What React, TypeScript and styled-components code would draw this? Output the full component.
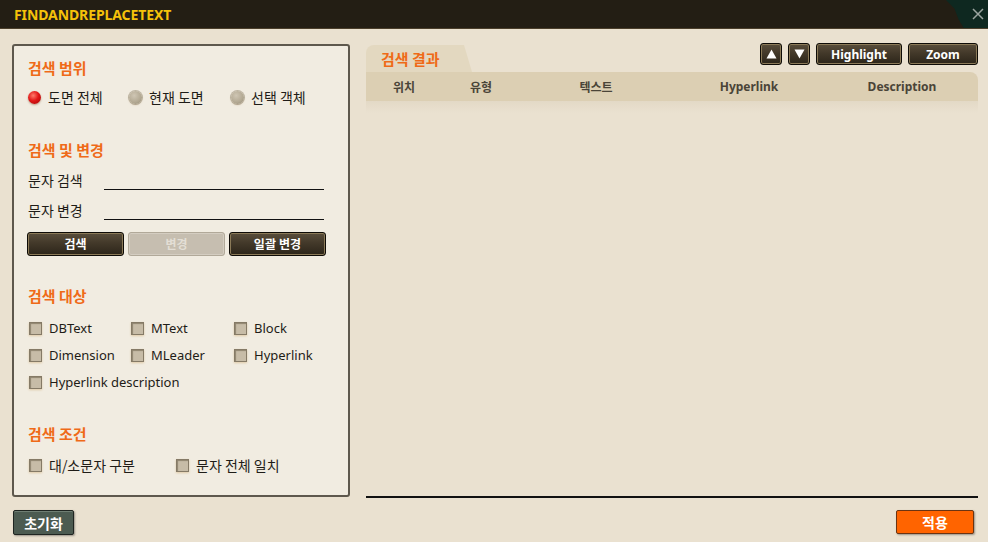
import React from "react";
import styled, { createGlobalStyle, css } from "styled-components";

const Global = createGlobalStyle`
  html, body { margin: 0; padding: 0; background: #eae1d0; }
  body { font-family: "Noto Sans", "Noto Sans CJK KR", sans-serif; }
  * { box-sizing: border-box; }
`;

const Window = styled.div`
  width: 988px;
  height: 542px;
  display: flex;
  flex-direction: column;
  background: #eae1d0;
  overflow: hidden;
`;

const TitleBar = styled.div`
  height: 29px;
  flex: none;
  display: flex;
  align-items: stretch;
  justify-content: space-between;
  background: #231e14;
  border-bottom: 1px solid #4b3f2b;
`;

const Title = styled.div`
  padding-left: 14px;
  display: flex;
  align-items: center;
  color: #f5c20a;
  font-family: "Noto Sans", sans-serif;
  font-weight: 700;
  font-size: 14px;
  letter-spacing: -0.1px;
`;

const CloseArea = styled.div`
  width: 42px;
  display: flex;
  align-items: center;
  justify-content: flex-end;
  padding-right: 4px;
  background: #0e2820;
  clip-path: polygon(0 0, 100% 0, 100% 100%, 42% 100%, 30% 70%, 20% 30%);
`;

const Body = styled.div`
  display: flex;
  padding: 15px 10px 0 12px;
  height: 469px;
  flex: none;
`;

const LeftPanel = styled.div`
  width: 338px;
  height: 453px;
  flex: none;
  background: #f1ece1;
  border: 2px solid #5e584d;
  border-radius: 3px;
  padding: 12px 14px 0 14px;
  display: flex;
  flex-direction: column;
`;

const SectionTitle = styled.div<{ $mt?: number }>`
  height: 20px;
  line-height: 20px;
  color: #ef6a18;
  font-family: "Noto Sans CJK KR", sans-serif;
  font-weight: 700;
  font-size: 15px;
  margin-top: ${(p) => p.$mt ?? 0}px;
`;

const OptionGrid = styled.div<{ $mt: number; $cols?: string }>`
  display: grid;
  grid-template-columns: ${(p) => p.$cols ?? "101px 102px 102px"};
  row-gap: 7px;
  margin-top: ${(p) => p.$mt}px;
`;

const Option = styled.label<{ $span?: number; $indent?: number; $ko?: boolean }>`
  display: flex;
  align-items: center;
  height: 20px;
  gap: 7px;
  font-size: ${(p) => (p.$ko ? 14 : 13)}px;
  color: #1f1c17;
  font-family: ${(p) =>
    p.$ko ? `"Noto Sans CJK KR", sans-serif` : `"Noto Sans", "Noto Sans CJK KR", sans-serif`};
  padding-left: ${(p) => p.$indent ?? 0}px;
  ${(p) => p.$span && css`grid-column: span ${p.$span};`}
  white-space: nowrap;
`;

const RadioDot = styled.span<{ $on?: boolean }>`
  width: 13px;
  height: 13px;
  border-radius: 50%;
  flex: none;
  ${(p) =>
    p.$on
      ? css`
          background: radial-gradient(circle at 40% 35%, #ff7b6b 0%, #e21818 45%, #9c0404 100%);
          box-shadow: 0 1px 2px rgba(120, 60, 20, 0.45);
        `
      : css`
          background: radial-gradient(circle at 40% 35%, #cfc6b4 0%, #b2a892 60%, #8f8670 100%);
          box-shadow: 0 0 0 1px rgba(140, 128, 104, 0.5), 0 1px 2px rgba(150, 110, 60, 0.35);
        `}
`;

const CheckBox = styled.span`
  width: 13px;
  height: 13px;
  flex: none;
  background: #c7bca7;
  border: 1px solid #857a66;
  box-shadow: inset 1px 1px 1px #8f846f, 0 1px 2px rgba(200, 150, 80, 0.4);
`;

const FieldRow = styled.div<{ $mt: number }>`
  display: flex;
  align-items: stretch;
  height: 20px;
  margin-top: ${(p) => p.$mt}px;
`;

const FieldLabel = styled.div`
  width: 76px;
  flex: none;
  line-height: 20px;
  font-size: 14px;
  color: #1f1c17;
  font-family: "Noto Sans CJK KR", sans-serif;
`;

const FieldInput = styled.div`
  width: 220px;
  border-bottom: 1px solid #111;
`;

const ButtonRow = styled.div`
  display: grid;
  grid-template-columns: 97px 97px 97px;
  column-gap: 4px;
  margin-top: 12px;
  margin-left: -1px;
`;

const DarkButton = styled.button<{ $w?: number; $h?: number }>`
  height: ${(p) => p.$h ?? 24}px;
  ${(p) => p.$w && css`width: ${p.$w}px;`}
  padding: 0;
  border: 1px solid #0e0b06;
  border-radius: 3px;
  background: linear-gradient(#5a4e3b 0%, #43392a 45%, #2c2519 100%);
  box-shadow: inset 0 0 0 1px #8b7a58;
  color: #fff;
  font-family: "Noto Sans", "Noto Sans CJK KR", sans-serif;
  font-weight: 700;
  font-size: 12px;
  display: flex;
  align-items: center;
  justify-content: center;
  &:disabled {
    background: #c6beb0;
    border-color: #b1a999;
    box-shadow: inset 0 0 0 1px #d4cdc1;
    color: #e3ded5;
  }
`;

const RightPane = styled.div`
  flex: 1;
  margin-left: 16px;
  display: flex;
  flex-direction: column;
  height: 454px;
  border-bottom: 2px solid #111;
`;

const TopRow = styled.div`
  display: flex;
  justify-content: space-between;
  align-items: flex-start;
`;

const Tab = styled.div`
  position: relative;
  margin-top: 1px;
  width: 94px;
  height: 27px;
  padding-left: 15px;
  line-height: 27px;
  background: #e3d8c0;
  border-top-left-radius: 8px;
  color: #ef6a18;
  font-family: "Noto Sans CJK KR", sans-serif;
  font-weight: 700;
  font-size: 15px;
  &::after {
    content: "";
    position: absolute;
    top: 0;
    right: -12px;
    width: 16px;
    height: 27px;
    background: #e3d8c0;
    border-top-right-radius: 8px;
    clip-path: polygon(0 0, 50% 0, 100% 100%, 0 100%);
  }
`;

const ToolButtons = styled.div`
  display: flex;
  gap: 6px;
  margin-top: -1px;
`;

const TableHeader = styled.div`
  display: grid;
  grid-template-columns: 76px 78px 152px 154px 152px;
  height: 29px;
  align-items: center;
  background: #dccfb3;
  border-top-right-radius: 8px;
  color: #4a4438;
  font-family: "Noto Sans", "Noto Sans CJK KR", sans-serif;
  font-weight: 700;
  font-size: 12px;
  text-align: center;
`;

const TableBody = styled.div`
  flex: 1;
  background: linear-gradient(#e3d9c6 0px, #eae1d0 12px);
`;

const Footer = styled.div`
  display: flex;
  justify-content: space-between;
  align-items: flex-start;
  padding: 12px 14px 0 13px;
`;

const ResetButton = styled.button`
  width: 61px;
  height: 25px;
  padding: 0;
  border: 1px solid #1f2521;
  border-radius: 2px;
  background: #4c5b51;
  box-shadow: inset 0 1px 0 #6f7e73, 1px 1px 2px rgba(0, 0, 0, 0.35);
  color: #fff;
  font-family: "Noto Sans CJK KR", sans-serif;
  font-weight: 700;
  font-size: 14px;
`;

const ApplyButton = styled.button`
  width: 78px;
  height: 24px;
  padding: 0;
  border: 1px solid #6b3412;
  border-radius: 2px;
  background: #ff6400;
  box-shadow: 1px 1px 2px rgba(0, 0, 0, 0.35);
  color: #fff;
  font-family: "Noto Sans CJK KR", sans-serif;
  font-weight: 700;
  font-size: 14px;
`;

const Tri = ({ up }: { up?: boolean }) => (
  <svg width="11" height="10" viewBox="0 0 11 10">
    <polygon points={up ? "5.5,0.5 10.5,9.5 0.5,9.5" : "0.5,0.5 10.5,0.5 5.5,9.5"} fill="#fff" />
  </svg>
);

export default function App() {
  return (
    <>
      <Global />
      <Window>
        <TitleBar>
          <Title>FINDANDREPLACETEXT</Title>
          <CloseArea>
            <svg width="12" height="12" viewBox="0 0 12 12">
              <path d="M1 1 L11 11 M11 1 L1 11" stroke="#9aa49f" strokeWidth="1.5" />
            </svg>
          </CloseArea>
        </TitleBar>
        <Body>
          <LeftPanel>
            <SectionTitle>검색 범위</SectionTitle>
            <OptionGrid $mt={9}>
              <Option $ko $indent={-1}>
                <RadioDot $on />
                도면 전체
              </Option>
              <Option $ko>
                <RadioDot />
                현재 도면
              </Option>
              <Option $ko $indent={-1}>
                <RadioDot />
                선택 객체
              </Option>
            </OptionGrid>

            <SectionTitle $mt={33}>검색 및 변경</SectionTitle>
            <FieldRow $mt={10}>
              <FieldLabel>문자 검색</FieldLabel>
              <FieldInput />
            </FieldRow>
            <FieldRow $mt={10}>
              <FieldLabel>문자 변경</FieldLabel>
              <FieldInput />
            </FieldRow>
            <ButtonRow>
              <DarkButton>검색</DarkButton>
              <DarkButton disabled>변경</DarkButton>
              <DarkButton>일괄 변경</DarkButton>
            </ButtonRow>

            <SectionTitle $mt={30}>검색 대상</SectionTitle>
            <OptionGrid $mt={12}>
              <Option $indent={1}>
                <CheckBox />
                DBText
              </Option>
              <Option $indent={2}>
                <CheckBox />
                MText
              </Option>
              <Option $indent={3}>
                <CheckBox />
                Block
              </Option>
              <Option $indent={1}>
                <CheckBox />
                Dimension
              </Option>
              <Option $indent={2}>
                <CheckBox />
                MLeader
              </Option>
              <Option $indent={3}>
                <CheckBox />
                Hyperlink
              </Option>
              <Option $indent={1} $span={3}>
                <CheckBox />
                Hyperlink description
              </Option>
            </OptionGrid>

            <SectionTitle $mt={32}>검색 조건</SectionTitle>
            <OptionGrid $mt={11} $cols="148px 150px">
              <Option $ko $indent={1}>
                <CheckBox />
                대/소문자 구분
              </Option>
              <Option $ko>
                <CheckBox />
                문자 전체 일치
              </Option>
            </OptionGrid>
          </LeftPanel>

          <RightPane>
            <TopRow>
              <Tab>검색 결과</Tab>
              <ToolButtons>
                <DarkButton $w={22} $h={22}>
                  <Tri up />
                </DarkButton>
                <DarkButton $w={22} $h={22}>
                  <Tri />
                </DarkButton>
                <DarkButton $w={86} $h={22}>Highlight</DarkButton>
                <DarkButton $w={70} $h={22}>Zoom</DarkButton>
              </ToolButtons>
            </TopRow>
            <TableHeader>
              <span>위치</span>
              <span>유형</span>
              <span>텍스트</span>
              <span>Hyperlink</span>
              <span>Description</span>
            </TableHeader>
            <TableBody />
          </RightPane>
        </Body>
        <Footer>
          <ResetButton>초기화</ResetButton>
          <ApplyButton>적용</ApplyButton>
        </Footer>
      </Window>
    </>
  );
}
